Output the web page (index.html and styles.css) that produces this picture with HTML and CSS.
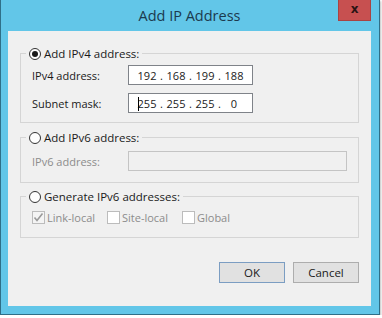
FILE: index.html
```html
<!DOCTYPE html>
<html lang="en">
<head>
    <meta charset="UTF-8">
    <title>Add IP Address</title>
    <link rel="stylesheet" href="styles.css">
</head>
<body>
<div class="window">
    <div class="titlebar">
        <span class="title">Add IP Address</span>
        <div class="close">x</div>
    </div>

    <div class="client">
        <fieldset class="group">
            <legend><span class="radio checked"></span>Add IPv4 address:</legend>
            <div class="field-row">
                <span class="field-label">IPv4 address:</span>
                <div class="ip-box">
                    <span class="octet">192</span><span class="dot">.</span>
                    <span class="octet">168</span><span class="dot">.</span>
                    <span class="octet">199</span><span class="dot">.</span>
                    <span class="octet">188</span>
                </div>
            </div>
            <div class="field-row">
                <span class="field-label">Subnet mask:</span>
                <div class="ip-box">
                    <span class="octet caret">255</span><span class="dot">.</span>
                    <span class="octet">255</span><span class="dot">.</span>
                    <span class="octet">255</span><span class="dot">.</span>
                    <span class="octet">0</span>
                </div>
            </div>
        </fieldset>

        <fieldset class="group group-v6">
            <legend><span class="radio"></span>Add IPv6 address:</legend>
            <div class="field-row">
                <span class="field-label disabled">IPv6 address:</span>
                <div class="text-box disabled"></div>
            </div>
        </fieldset>

        <fieldset class="group group-gen">
            <legend><span class="radio"></span>Generate IPv6 addresses:</legend>
            <div class="check-row">
                <span class="check-item">
                    <span class="checkbox">
                        <svg width="11" height="11" viewBox="0 0 11 11"><polyline points="1.5,5.5 4,8.5 9.5,1.5" fill="none" stroke="#9a9a9a" stroke-width="1.6"/></svg>
                    </span>Link-local
                </span>
                <span class="check-item"><span class="checkbox"></span>Site-local</span>
                <span class="check-item"><span class="checkbox"></span>Global</span>
            </div>
        </fieldset>

        <div class="button-row">
            <button class="button default">OK</button>
            <button class="button">Cancel</button>
        </div>
    </div>
</div>
</body>
</html>
```

FILE: styles.css
```css
body {
    margin: 0;
    background-color: #ffffff;
    font-family: "Open Sans", "Noto Sans", sans-serif;
    font-size: 11px;
    color: #1a1a1a;
}

.window {
    width: 380px;
    height: 315px;
    box-sizing: border-box;
    border: 1px solid #2f6f88;
    border-top: none;
    background-color: #62c6e8;
    padding: 0 8px 8px 7px;
    display: flex;
    flex-direction: column;
    box-shadow: 1px 1px 2px rgba(0, 0, 0, 0.25);
}

.titlebar {
    height: 31px;
    flex-shrink: 0;
    display: flex;
    align-items: center;
    justify-content: center;
    position: relative;
}

.title {
    font-size: 14.5px;
    color: #1c3a4e;
}

.close {
    position: absolute;
    top: 0;
    right: 0;
    width: 33px;
    height: 21px;
    box-sizing: border-box;
    background-color: #c75050;
    border: 1px solid #a84343;
    border-top: none;
    color: #2a1414;
    font-family: "DejaVu Sans", sans-serif;
    font-weight: bold;
    font-size: 12px;
    line-height: 18px;
    text-align: center;
}

.client {
    flex: 1;
    background-color: #f0f0f0;
    padding: 16px 12px 0;
    display: flex;
    flex-direction: column;
}

.group {
    margin: 0;
    padding: 5px 11px 9px;
    border: 1px solid #d5d5d5;
    min-width: 0;
}

.group legend {
    display: flex;
    align-items: center;
    line-height: 13px;
    height: 13px;
    padding: 0 3px;
    margin-left: -6px;
    font-size: 11.5px;
}

.group-v6 {
    margin-top: 8px;
    padding-top: 7px;
    padding-bottom: 11px;
}

.group-gen {
    margin-top: 7px;
    padding-top: 7px;
    padding-bottom: 13px;
}

.radio {
    width: 12px;
    height: 12px;
    box-sizing: border-box;
    border: 1px solid #333333;
    border-radius: 50%;
    background-color: #ffffff;
    margin-right: 3px;
    position: relative;
}

.radio.checked::after {
    content: "";
    position: absolute;
    left: 2px;
    top: 2px;
    width: 6px;
    height: 6px;
    border-radius: 50%;
    background-color: #1a1a1a;
}

.field-row {
    display: flex;
    align-items: center;
    height: 20px;
}

.field-row + .field-row {
    margin-top: 8px;
}

.field-label {
    width: 96px;
    flex-shrink: 0;
}

.disabled {
    color: #8c8c8c;
}

.ip-box {
    width: 125px;
    height: 20px;
    box-sizing: border-box;
    border: 1px solid #7f8389;
    background-color: #ffffff;
    padding-left: 7px;
    display: flex;
    align-items: center;
}

.octet {
    width: 22px;
    text-align: center;
}

.caret {
    position: relative;
}

.caret::before {
    content: "";
    position: absolute;
    left: 2px;
    top: 1px;
    width: 1px;
    height: 14px;
    background-color: #000000;
}

.dot {
    width: 7px;
    text-align: center;
}

.text-box {
    width: 220px;
    height: 20px;
    box-sizing: border-box;
    border: 1px solid #c4c4c4;
    background-color: #f0f0f0;
}

.check-row {
    display: flex;
    align-items: center;
    height: 14px;
    color: #8c8c8c;
}

.check-item {
    width: 75px;
    display: flex;
    align-items: center;
}

.checkbox {
    width: 13px;
    height: 13px;
    box-sizing: border-box;
    border: 1px solid #bcbcbc;
    background-color: #ffffff;
    margin-right: 2px;
    display: flex;
    align-items: center;
    justify-content: center;
}

.check-item:first-child .checkbox {
    background-color: #f4f4f4;
}

.button-row {
    display: flex;
    justify-content: flex-end;
    gap: 8px;
    margin-top: 24px;
}

.button {
    width: 66px;
    height: 21px;
    padding: 0;
    font-family: inherit;
    font-size: 11.5px;
    color: #1a1a1a;
    background-color: #e1e1e1;
    border: 1px solid #adadad;
    border-radius: 0;
}

.button.default {
    border-color: #7b9dc2;
}
```
